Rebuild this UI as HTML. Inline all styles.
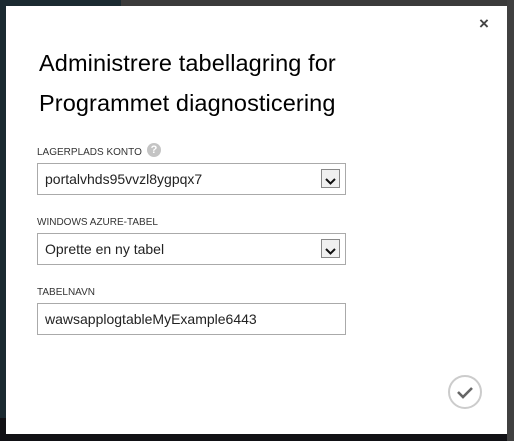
<!DOCTYPE html>
<html><head><style>
body{margin:0;width:514px;height:441px;overflow:hidden;background:#111115;position:relative;font-family:"Liberation Sans",sans-serif}
.l{position:absolute;left:0;top:0;width:121px;height:418px;background:#1b2a31}
.t{position:absolute;left:121px;top:0;width:393px;height:6px;background:#3b3b3b}
.r{position:absolute;left:507px;top:0;width:7px;height:441px;background:#404040}
.d{position:absolute;left:6px;top:6px;width:501px;height:428px;background:#fff}
h1{position:absolute;left:33px;margin:0;font-weight:normal;font-size:23.5px;color:#000;letter-spacing:0.1px}
.lab{position:absolute;left:31px;font-size:10px;color:#333}
.box{position:absolute;left:31px;width:309px;height:32px;border:1px solid #aaa;box-sizing:border-box;font-size:14px;color:#222;line-height:30px;padding-left:7px}
.btn{position:absolute;right:5px;top:5px;width:19px;height:19px;border:1px solid #888;background:#f0f0f0;box-sizing:border-box}
</style></head><body>
<div class="l"></div><div class="t"></div><div class="r"></div>
<div class="d">
<div style="position:absolute;left:473px;top:8px;font-size:17px;font-weight:bold;color:#444">×</div>
<h1 style="top:44px">Administrere tabellagring for</h1>
<h1 style="top:84px">Programmet diagnosticering</h1>
<div class="lab" style="top:141px">LAGERPLADS KONTO</div>
<div style="position:absolute;left:141px;top:137px;width:14px;height:14px;border-radius:50%;background:#c4c4c4;color:#fff;font-size:11px;font-weight:bold;text-align:center;line-height:14px">?</div>
<div class="box" style="top:157px">portalvhds95vvzl8ygpqx7<div class="btn"><svg width="17" height="17"><path d="M4 6l4.5 4.5L13 6" stroke="#111" stroke-width="2" fill="none"/></svg></div></div>
<div class="lab" style="top:211px">WINDOWS AZURE-TABEL</div>
<div class="box" style="top:227px">Oprette en ny tabel<div class="btn"><svg width="17" height="17"><path d="M4 6l4.5 4.5L13 6" stroke="#111" stroke-width="2" fill="none"/></svg></div></div>
<div class="lab" style="top:281px">TABELNAVN</div>
<div class="box" style="top:297px">wawsapplogtableMyExample6443</div>
<svg style="position:absolute;left:441px;top:368px" width="36" height="36"><circle cx="18" cy="18" r="16" stroke="#ccc" stroke-width="2" fill="none"/><path d="M11 18l5 5 9-9" stroke="#666" stroke-width="2.6" fill="none"/></svg>
</div>
</body></html>
